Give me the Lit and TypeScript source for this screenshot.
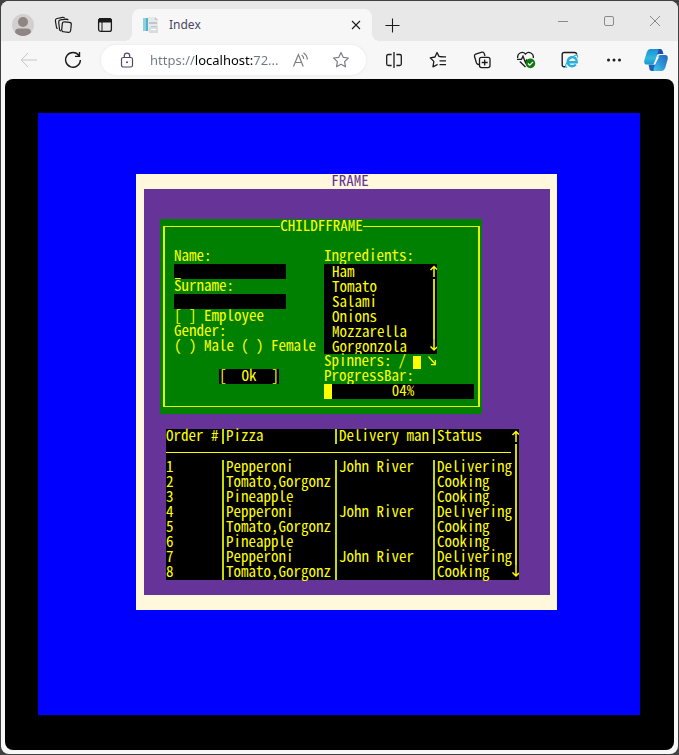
import { LitElement, html, css, svg } from "lit";
import { customElement } from "lit/decorators.js";

const icon = (w: number, h: number, body: unknown) => html`<svg
  width=${w} height=${h} viewBox="0 0 ${w} ${h}" fill="none" stroke="currentColor" aria-hidden="true">${body}</svg>`;

const avatar = icon(24, 24, svg`<circle cx="12" cy="12" r="11" fill="#d2d0ce" stroke="none"/>
  <circle cx="12" cy="9" r="5" fill="#8f8583" stroke="none"/>
  <path d="M4 19.5Q4 15.5 8 15.5H16Q20 15.5 20 19.5A11 11 0 0 1 4 19.5Z" fill="#8f8583" stroke="none"/>`);
const workspaces = icon(20, 18, svg`<rect x="8" y="6" width="9" height="10" rx="2" transform="rotate(6 12 11)" stroke-width="1.2"/>
  <path d="M5.5 13.5L4.7 6Q4.6 4.2 6.3 3.9L12.5 3.2Q13.8 3.2 14.2 4.2M2.5 11.5L1.4 4.8Q1.2 3 3 2.5L8.6 1.3Q10 1.1 10.6 2.2M5.5 13.5Q5.8 14.8 7 15M2.5 11.5Q2.8 12.4 3.6 12.7" stroke-width="1.2"/>`);
const tabActions = icon(16, 16, svg`<rect x="1.6" y="1.6" width="12.8" height="12.8" rx="2.2" stroke-width="1.3"/>
  <path d="M1.5 5V3.5Q1.5 1.5 3.5 1.5H12.5Q14.5 1.5 14.5 3.5V5Z" fill="currentColor"/><path d="M5 5V14"/>`);
const favicon = icon(16, 16, svg`<g stroke="none"><path d="M0 1H5V14H0Z" fill="#4fb3cf"/><path d="M0 1H3V14H0Z" fill="#8fd0e0"/>
  <path d="M5 0H12L15 3V15H5Z" fill="#e6e8ea"/><path d="M6 5H14V7H6ZM8 9H14V10H8Z" fill="#c2c6ca"/><path d="M6 10H15V16H6Z" fill="#d9dde0"/>
  <path d="M8 12H13V13H8Z" fill="#fff"/><path d="M12 0V3H15Z" fill="#bfc4c8"/></g>`);
const tabClose = icon(10, 10, svg`<path d="M1 1L9 9M9 1L1 9" stroke-width="1.1"/>`);
const plus = icon(15, 15, svg`<path d="M7.5 0.5V14.5M0.5 7.5H14.5" stroke-width="1.1"/>`);
const minimise = icon(12, 12, svg`<path d="M1 6.5H11"/>`);
const maximise = icon(12, 12, svg`<rect x="1.5" y="1.5" width="9" height="9" rx="1.5"/>`);
const closeWin = icon(12, 12, svg`<path d="M1 1L11 11M11 1L1 11"/>`);
const back = icon(18, 16, svg`<path d="M17 8H1.5M8 1L1.2 8L8 15"/>`);
const reload = icon(18, 18, svg`<path d="M15 4.5A7.4 7.4 0 1 0 16.4 9M15.5 1V5.4H11" stroke-width="1.4"/>`);
const lock = icon(14, 16, svg`<rect x="1.5" y="5.5" width="11" height="9.5" rx="1.8" stroke-width="1.2"/><path d="M4.3 5.5V3.8A2.7 2.7 0 0 1 9.7 3.8V5.5" stroke-width="1.2"/><circle cx="7" cy="10.2" r="1" fill="currentColor" stroke="none"/>`);
const readAloud = icon(18, 16, svg`<path d="M1.5 14.5L6.4 2.5L11.2 14.5M3.3 10.5H9.5M9.7 3Q11.7 4.5 11.8 7M11.5 1Q15.2 3.3 15.4 7.6" stroke-width="1.2"/>`);
const starPath = "M9 1.6L11.2 6.3L16.4 7L12.6 10.6L13.5 15.8L9 13.3L4.5 15.8L5.4 10.6L1.6 7L6.8 6.3Z";
const star = icon(18, 18, svg`<path d=${starPath} stroke-width="1.2" stroke-linejoin="round"/>`);
const split = icon(18, 18, svg`<path d="M6.6 3.5H3.3Q1.7 3.5 1.7 5V13Q1.7 14.5 3.3 14.5H6.6M11.4 3.5H14.7Q16.3 3.5 16.3 5V13Q16.3 14.5 14.7 14.5H11.4M9 1V17" stroke-width="1.3"/>`);
const favourites = icon(18, 18, svg`<path d="M13.5 5.6L10 5.4L8 1.5L6 6L1.2 6.8L4.8 10.4L4 15.8L8.6 13.4M10.5 5.9H17M10.5 9.8H17M10.5 13.7H17" stroke-width="1.3" stroke-linejoin="round"/>`);
const collections = icon(18, 18, svg`<rect x="6.5" y="6.3" width="10.5" height="10.3" rx="2" stroke-width="1.3"/>
  <path d="M11.7 8.5V14.5M8.7 11.5H14.7M6 13.5Q4.2 13.6 3.5 12L1.5 5.5Q1 3.8 2.6 3.2L9 1.2Q10.6 .8 11.2 2.4L12 5" stroke-width="1.3"/>`);
const health = icon(20, 18, svg`<path d="M1.8 7A4.4 4.4 0 0 1 9.5 3.2A4.4 4.4 0 0 1 17.2 7M1 8.3H5.5L7 5.2L9.5 11.5L11 8.3M3.8 10.5L9.5 16" stroke-width="1.3"/>
  <circle cx="14.4" cy="12.4" r="4.8" fill="#0f7a0f" stroke="none"/><path d="M12 12.5L13.8 14.2L17 10.8" stroke="#fff" stroke-width="1.2"/>`);
const ieMode = icon(18, 18, svg`<path d="M4.5 15.8H3.2Q1.2 15.8 1.2 13.8V3.5Q1.2 1.5 3.2 1.5H13.5Q15.5 1.5 15.7 3.5" stroke-width="1.4"/>
  <path d="M6.8 11.2H15.8A4.6 4.6 0 1 0 14.8 13.6" stroke="#2bb0dc" stroke-width="2.4"/><path d="M6.2 16Q3.4 16.8 5.3 12.6Q9 6.5 14.5 4.3Q17.5 3.6 16.4 6.6" stroke="#2bb0dc" stroke-width="1.1"/>`);
const dots = icon(16, 16, svg`<g fill="currentColor" stroke="none"><circle cx="2.5" cy="8" r="1.5"/><circle cx="8" cy="8" r="1.5"/><circle cx="13.5" cy="8" r="1.5"/></g>`);
const copilot = icon(24, 24, svg`<defs>
  <linearGradient id="ca" x1="0" y1="0" x2="0" y2="1"><stop offset="0" stop-color="#1c8fd6"/><stop offset=".6" stop-color="#2fb9dc"/><stop offset="1" stop-color="#1e93cf"/></linearGradient>
  <linearGradient id="cb" x1="1" y1="0" x2="0" y2="1"><stop offset="0" stop-color="#2466bd"/><stop offset=".5" stop-color="#2d92d6"/><stop offset="1" stop-color="#46c9ea"/></linearGradient></defs>
  <g stroke="none"><path d="M12 1H16.5Q18 1 18.5 2.8L19.5 6H15L12 7Z" fill="#1d4fa5"/>
  <path d="M12 23H7.5Q6 23 5.5 21.2L4.5 16.5H9L12 17Z" fill="#1a63bd"/>
  <path d="M6.5 1H13.5Q15 1 14.2 3.5L11 14Q10.2 16.5 7.5 16.5H3Q-.5 16.5 .4 12L2.5 5Q3.8 1 6.5 1Z" fill="url(#ca)"/>
  <path d="M17.5 23H10.5Q9 23 9.8 20.5L13 9.5Q13.8 7 16.5 7H21Q24.5 7 23.6 11.5L21.5 19Q20.2 23 17.5 23Z" fill="url(#cb)"/>
  <path d="M13 8.5H15.2L11.4 16H9.6Z" fill="#f7f7f7"/></g>`);
const arrowUp = icon(8, 15, svg`<path d="M5 13V3M1.5 6L5 2.5L8 5.5" stroke-width="1.5"/>`);
const arrowDown = icon(8, 15, svg`<path d="M5 0V11M1.5 7.5L5 11L8 8" stroke-width="1.5"/>`);
const arrowDiagonal = icon(8, 15, svg`<path d="M.5 2.5L7 10M7.3 6V10.6H3" stroke-width="1.2"/>`);

const INGREDIENTS = ["Ham", "Tomato", "Salami", "Onions", "Mozzarella", "Gorgonzola"];
const ORDERS = Array.from({ length: 8 }, (_, i) => ({
  id: i + 1,
  pizza: ["Pepperoni", "Tomato,Gorgonz", "Pineapple"][i % 3],
  man: i % 3 === 0 ? "John River" : "",
  status: i % 3 === 0 ? "Delivering" : "Cooking",
}));

@customElement("browser-chrome")
class BrowserChrome extends LitElement {
  static styles = css`
    :host { display: block; font-family: "Noto Sans", "Open Sans", sans-serif; }
    svg { display: block; flex: none; }
    button { border: 0; padding: 0; background: none; color: #1b1b1b; font: inherit;
      display: flex; align-items: center; justify-content: center; flex: none; }
    .titlebar { display: flex; height: 40px; padding-left: 1px; background: #e8e8e8; }
    .titlebar > button { width: 41px; height: 40px; padding-top: 8px; }
    .titlebar .window { width: 46px; padding-top: 0; color: #8a8a8a; }
    .tab { position: relative; display: flex; align-items: center; flex: 0 1 240px; box-sizing: border-box;
      margin: 8px 0 0 7px; padding: 0 11px; background: #f7f7f7; border-radius: 8px 8px 0 0; font-size: 12px; color: #4a4560; }
    .tab::before, .tab::after { content: ""; position: absolute; bottom: 0; width: 8px; height: 8px; }
    .tab::before { right: 100%; background: radial-gradient(circle at 0 0, #e8e8e8 8px, #f7f7f7 8px); }
    .tab::after { left: 100%; background: radial-gradient(circle at 100% 0, #e8e8e8 8px, #f7f7f7 8px); }
    .title { flex: 1; margin-left: 10px; }
    .spacer { flex: 1; }
    .toolbar { display: flex; align-items: center; height: 38px; padding: 0 2px 0 6px; background: #f7f7f7; }
    .toolbar > button { width: 44px; height: 38px; }
    .toolbar .disabled { color: #c6c6c6; }
    .toolbar .copilot { width: 40px; }
    .address { display: flex; align-items: center; flex: 1; min-width: 0; height: 30px; margin: 0 6px; padding: 0 16px 0 19px;
      box-sizing: border-box; border-radius: 15px; background: #fff; box-shadow: 0 0 3px #e4e4e4; }
    .address button { color: #807c84; }
    .address .lock { color: #554668; }
    .url { flex: 1; min-width: 0; border: 0; padding: 0; margin: 0 14px 0 16px; outline: 0;
      font: 13px/20px "Noto Sans", "Open Sans", sans-serif; color: transparent;
      background: linear-gradient(to right, #6d7b7d 46px, #000 46px, #000 103px, #6d7b7d 103px);
      -webkit-background-clip: text; background-clip: text; }
    .star { margin-left: 22px; }
  `;
  render() {
    return html`
      <header class="titlebar">
        <button aria-label="Profile">${avatar}</button>
        <button aria-label="Workspaces">${workspaces}</button>
        <button aria-label="Tab actions">${tabActions}</button>
        <div class="tab">${favicon}<span class="title">Index</span><button aria-label="Close tab">${tabClose}</button></div>
        <button aria-label="New tab">${plus}</button>
        <span class="spacer"></span>
        <button class="window" aria-label="Minimize">${minimise}</button>
        <button class="window" aria-label="Maximize">${maximise}</button>
        <button class="window" aria-label="Close">${closeWin}</button>
      </header>
      <nav class="toolbar">
        <button class="disabled" aria-label="Back">${back}</button>
        <button aria-label="Refresh">${reload}</button>
        <div class="address">
          <button class="lock" aria-label="Site information">${lock}</button>
          <input class="url" aria-label="Address" value="https://localhost:72..." spellcheck="false" />
          <button aria-label="Read aloud">${readAloud}</button>
          <button class="star" aria-label="Add to favorites">${star}</button>
        </div>
        <button aria-label="Split screen">${split}</button>
        <button aria-label="Favorites">${favourites}</button>
        <button aria-label="Collections">${collections}</button>
        <button aria-label="Browser essentials">${health}</button>
        <button aria-label="Internet Explorer mode">${ieMode}</button>
        <button aria-label="Settings and more">${dots}</button>
        <button class="copilot" aria-label="Copilot">${copilot}</button>
      </nav>`;
  }
}

/* Every terminal row is 15px tall; the shorter line box keeps descenders inside it. */
const terminal = css`
  :host { display: block; color: #ff0; font: 15px/12px "Noto Sans Mono CJK SC", "DejaVu Sans Mono", monospace; }
  svg { display: block; flex: none; }
  .scroll { display: flex; flex-direction: column; width: 8px; flex: none; }
  .scroll button { display: block; width: 8px; height: 15px; border: 0; padding: 0; background: none; color: inherit; }
  .scroll .track { flex: 1; width: 2px; margin-left: 4px; background: #d8d800; }
`;

@customElement("order-form")
class OrderForm extends LitElement {
  static styles = [terminal, css`
    .panel { width: 317px; padding: 0 2px 7px 3px; background: #008000; }
    .frame { border: solid #e6f000; border-width: 1px 2px; margin: 0; padding: 15px 4px 7px; min-width: 0; }
    .frame > legend { height: 15px; margin: 0 auto; padding: 0; }
    .columns { display: grid; grid-template-columns: 150px 150px; margin-left: 5px; }
    .left, .right { white-space: nowrap; min-width: 0; }
    label, .row { display: block; height: 15px; }
    input, select, button { font: inherit; color: inherit; border: 0; border-radius: 0; margin: 0; padding: 0; outline: 0; box-sizing: border-box; }
    .text { display: block; width: 112px; height: 15px; padding-bottom: 3px; background: #000; }
    .choices { display: flex; }
    .choice { display: flex; }
    .choice + .choice { margin-left: 7px; }
    .tick { appearance: none; width: 30px; height: 15px; flex: none; white-space: pre; background: none; }
    .square::before { content: "[ ]"; }
    .round::before { content: "( )"; }
    .ok { display: block; width: 60px; height: 15px; margin: 15px 0 0 45px; padding-bottom: 3px; background: #000; white-space: pre; }
    .list { display: flex; width: 113px; height: 90px; background: #000; }
    select { flex: 1; min-width: 0; height: 90px; background: #000; overflow: hidden; scrollbar-width: none; }
    option { display: flex; align-items: center; height: 15px; min-height: 15px; padding: 0 0 3px 8px; color: #ff0; box-sizing: border-box; }
    .spinners { display: flex; gap: 7px; }
    .block { width: 8px; height: 13px; margin-top: 2px; background: #ff0; }
    .meter { position: relative; height: 15px; background: #000; text-align: center; }
    .meter progress { appearance: none; display: block; width: 100%; height: 15px; border: 0; }
    .meter progress::-webkit-progress-bar { background: #000; }
    .meter progress::-webkit-progress-value { background: #ff0; min-width: 8px; }
    .percent { position: absolute; inset: 0 0 0 8px; }
  `];
  render() {
    return html`
      <form class="panel"><fieldset class="frame"><legend>CHILDFFRAME</legend>
        <div class="columns">
          <div class="left">
            <label for="name">Name:</label><input id="name" class="text" value="_" />
            <label for="surname">Surname:</label><input id="surname" class="text" />
            <label class="choice"><input type="checkbox" class="tick square" />Employee</label>
            <div class="row" id="gender">Gender:</div>
            <div class="choices" role="radiogroup" aria-labelledby="gender">
              <label class="choice"><input type="radio" name="gender" class="tick round" />Male</label>
              <label class="choice"><input type="radio" name="gender" class="tick round" />Female</label>
            </div>
            <button type="button" class="ok">[  Ok  ]</button>
          </div>
          <div class="right">
            <label for="ingredients">Ingredients:</label>
            <div class="list">
              <select id="ingredients" size="6">${INGREDIENTS.map((i) => html`<option>${i}</option>`)}</select>
              <div class="scroll"><button type="button" aria-label="Scroll up">${arrowUp}</button><span class="track"></span><button type="button" aria-label="Scroll down">${arrowDown}</button></div>
            </div>
            <div class="row spinners"><span>Spinners:</span><span>/</span><span class="block"></span>${arrowDiagonal}</div>
            <label for="progress">ProgressBar:</label>
            <div class="meter"><progress id="progress" value="4" max="100"></progress><span class="percent">04%</span></div>
          </div>
        </div>
      </fieldset></form>`;
  }
}

@customElement("order-table")
class OrderTable extends LitElement {
  static styles = [terminal, css`
    .orders { display: flex; width: 353px; background: #000; }
    table { flex: 1; table-layout: fixed; border-collapse: separate; border-spacing: 0; width: 345px; }
    th, td { height: 15px; padding: 0 0 0 2px; text-align: left; vertical-align: top; font-weight: normal; white-space: nowrap; border-right: 2px solid #c8d800; }
    th:first-child, td:first-child { padding-left: 0; }
    th:last-child, td:last-child { border-right: 0; }
    .c1 { width: 58px; } .c2 { width: 113px; } .c3 { width: 98px; }
    .rule td { height: 16px; padding: 0; border: 0; vertical-align: middle; }
    hr { border: 0; height: 1px; margin: 0; background: #ff0; }
  `];
  render() {
    return html`<div class="orders">
      <table>
        <colgroup><col class="c1" /><col class="c2" /><col class="c3" /><col /></colgroup>
        <thead>
          <tr><th>Order #</th><th>Pizza</th><th>Delivery man</th><th>Status</th></tr>
          <tr class="rule"><td colspan="4"><hr /></td></tr>
        </thead>
        <tbody>${ORDERS.map((o) => html`<tr><td>${o.id}</td><td>${o.pizza}</td><td>${o.man}</td><td>${o.status}</td></tr>`)}</tbody>
      </table>
      <div class="scroll"><button aria-label="Scroll up">${arrowUp}</button><span class="track"></span><button aria-label="Scroll down">${arrowDown}</button></div>
    </div>`;
  }
}

@customElement("app-root")
class AppRoot extends LitElement {
  static styles = [terminal, css`
    :host { background: #414141; min-height: 100vh; display: flex; box-sizing: border-box; padding: 1px; }
    .window { flex: 1; min-width: 0; display: flex; flex-direction: column; border-radius: 8px; overflow: hidden; background: #f7f7f7; }
    .page { flex: 1; display: flex; margin: 0 4px 4px; padding: 34px 34px 35px 33px; border-radius: 8px; background: #000; }
    .screen { flex: 1; min-width: 0; padding: 61px 83px 105px 98px; background: #00f; }
    .outer { background: #fff8dc; padding: 0 7px 15px 8px; }
    .heading { height: 15px; margin: 0; font: inherit; text-align: center; color: #639; padding-left: 6px; }
    .inner { display: flex; flex-direction: column; gap: 15px; padding: 30px 16px 15px; background: #639; }
    .orders { margin-left: 6px; }
  `];
  render() {
    return html`<div class="window">
      <browser-chrome></browser-chrome>
      <main class="page"><div class="screen"><section class="outer">
        <h1 class="heading">FRAME</h1>
        <div class="inner"><order-form></order-form><order-table class="orders"></order-table></div>
      </section></div></main>
    </div>`;
  }
}
